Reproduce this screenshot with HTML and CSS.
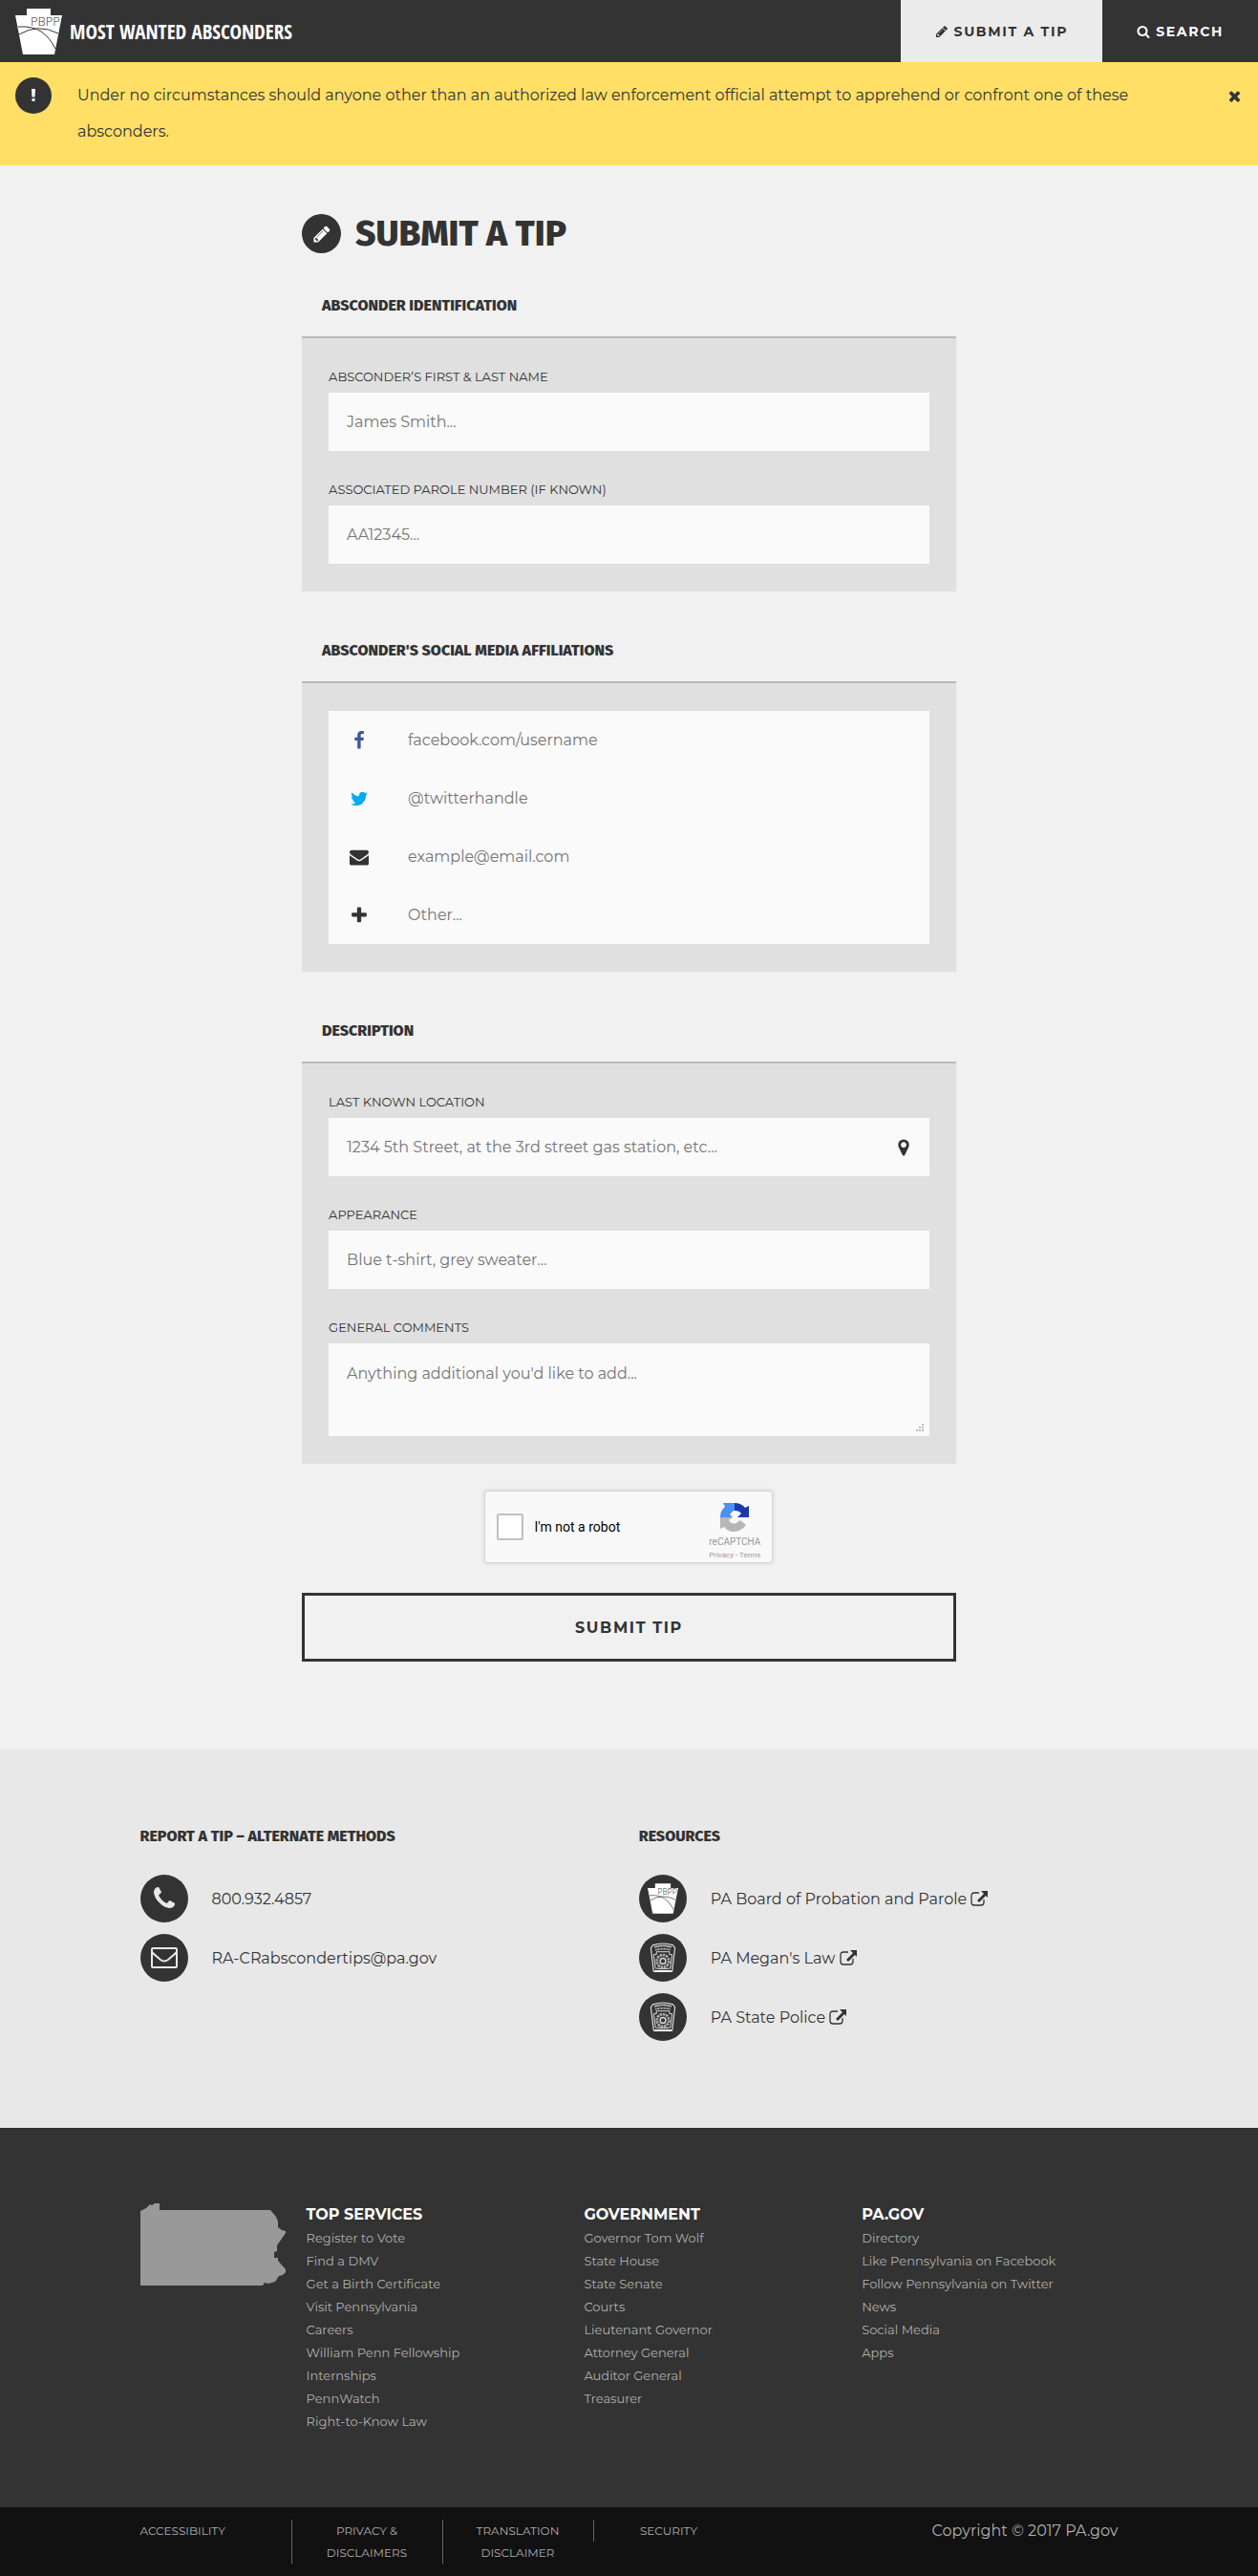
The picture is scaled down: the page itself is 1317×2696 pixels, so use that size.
FILE: index.html
```html
<!DOCTYPE html>
<html lang="en">
<head>
  <meta charset="UTF-8">
  <meta name="viewport" content="width=device-width, initial-scale=1.0">
  <title>Submit a Tip - Most Wanted Absconders</title>
  <link rel="stylesheet" href="styles.css">
</head>
<body>
  <!-- icon sprite -->
  <svg class="sprite" aria-hidden="true">
    <symbol id="pencil" viewBox="0 0 1792 1792"><path d="M491 1536l91-91-235-235-91 91v107h128v128h107zm523-928q0-22-22-22-10 0-17 7l-542 542q-7 7-7 17 0 22 22 22 10 0 17-7l542-542q7-7 7-17zm-54-192l416 416-832 832h-416v-416zm683 96q0 53-37 90l-166 166-416-416 166-165q36-38 90-38 53 0 91 38l235 234q37 39 37 91z"/></symbol>
    <symbol id="search" viewBox="0 0 1792 1792"><path d="M1216 832q0-185-131.500-316.500t-316.500-131.500-316.500 131.500-131.500 316.500 131.500 316.500 316.500 131.500 316.500-131.500 131.500-316.500zm512 832q0 52-38 90t-90 38q-54 0-90-38l-343-342q-179 124-399 124-143 0-273.500-55.500t-225-150-150-225-55.500-273.500 55.500-273.500 150-225 225-150 273.500-55.500 273.500 55.500 225 150 150 225 55.500 273.500q0 220-124 399l343 343q37 37 37 90z"/></symbol>
    <symbol id="exclamation" viewBox="0 0 12 28"><path d="M2 0h8l-1 17H3zM3 20h6v6H3z"/></symbol>
    <symbol id="close" viewBox="0 0 1792 1792"><path d="M1490 1322q0 40-28 68l-136 136q-28 28-68 28t-68-28l-294-294-294 294q-28 28-68 28t-68-28l-136-136q-28-28-28-68t28-68l294-294-294-294q-28-28-28-68t28-68l136-136q28-28 68-28t68 28l294 294 294-294q28-28 68-28t68 28l136 136q28 28 28 68t-28 68l-294 294 294 294q28 28 28 68z"/></symbol>
    <symbol id="facebook" viewBox="0 0 1792 1792"><path d="M1343 12v264h-157q-86 0-116 36t-30 108v189h293l-39 296h-254v759h-306v-759h-255v-296h255v-218q0-186 104-288.500t277-102.500q147 0 228 12z"/></symbol>
    <symbol id="twitter" viewBox="0 0 1792 1792"><path d="M1684 408q-67 98-162 167 1 14 1 42 0 130-38 259.500t-115.500 248.500-184.500 210.500-258 146-323 54.500q-271 0-496-145 35 4 78 4 225 0 401-138-105-2-188-64.500t-114-159.500q33 5 61 5 43 0 85-11-112-23-185.500-111.500t-73.500-205.500v-4q68 38 146 41-66-44-105-115t-39-154q0-88 44-163 121 149 294.500 238.500t371.500 99.500q-8-38-8-74 0-134 94.500-228.500t228.500-94.500q140 0 236 102 109-21 205-78-37 115-142 178 93-10 186-50z"/></symbol>
    <symbol id="envelope" viewBox="0 0 1792 1792"><path d="M1792 710v794q0 66-47 113t-113 47h-1472q-66 0-113-47t-47-113v-794q44 49 101 87 362 246 497 345 57 42 92.500 65.500t94.500 48 110 24.500h2q51 0 110-24.500t94.500-48 92.500-65.500q170-123 498-345 57-39 100-87zm0-294q0 79-49 151t-122 123q-376 261-468 325-10 7-42.500 31t-54 38.500-52 32.500-57.500 27-50 9h-2q-23 0-50-9t-57.500-27-52-32.500-54-38.500-42.500-31q-91-64-262-182.500t-205-142.500q-62-42-117-115.500t-55-136.500q0-78 41.500-130t118.500-52h1472q65 0 112.500 47t47.500 113z"/></symbol>
    <symbol id="plus" viewBox="0 0 1792 1792"><path d="M1600 736v192q0 40-28 68t-68 28h-416v416q0 40-28 68t-68 28h-192q-40 0-68-28t-28-68v-416h-416q-40 0-68-28t-28-68v-192q0-40 28-68t68-28h416v-416q0-40 28-68t68-28h192q40 0 68 28t28 68v416h416q40 0 68 28t28 68z"/></symbol>
    <symbol id="marker" viewBox="0 0 1792 1792"><path d="M1152 640q0-106-75-181t-181-75-181 75-75 181 75 181 181 75 181-75 75-181zm256 0q0 109-33 179l-364 774q-16 33-47.500 52t-67.500 19-67.500-19-46.500-52l-365-774q-33-70-33-179 0-212 150-362t362-150 362 150 150 362z"/></symbol>
    <symbol id="phone" viewBox="0 0 1792 1792"><path d="M1600 1240q0 27-10 70.500t-21 68.500q-21 50-122 106-94 51-186 51-27 0-53-3.500t-57.500-12.500-47-14.500-55.500-20.500-49-18q-98-35-175-83-127-79-264-216t-216-264q-48-77-83-175-3-9-18-49t-20.500-55.500-14.500-47-12.500-57.500-3.500-53q0-92 51-186 56-101 106-122 25-11 68.500-21t70.500-10q14 0 21 3 18 6 53 76 11 19 30 54t35 63.500 31 53.500q3 4 17.500 25t21.500 35.500 7 28.500q0 20-28.500 50t-62 55-62 53-28.500 46q0 9 5 22.500t8.500 20.500 14 24 11.500 19q76 137 174 235t235 174q2 1 19 11.500t24 14 20.500 8.500 22.500 5q18 0 46-28.500t53-62 55-62 50-28.500q14 0 28.500 7t35.500 21.500 25 17.500q25 15 53.500 31t63.500 35 54 30q70 35 76 53 3 7 3 21z"/></symbol>
    <symbol id="envelope-o" viewBox="0 0 28 28"><g fill="none" stroke="currentColor" stroke-width="2"><rect x="1" y="4" width="26" height="20" rx="1"/><path d="M1 8q3 3 9 8 4 3 8 0 6-5 9-8"/></g></symbol>
    <symbol id="external" viewBox="0 0 18 16"><path d="M9 2H4Q1 2 1 5v7q0 3 3 3h7q3 0 3-3V9" fill="none" stroke="currentColor" stroke-width="1.300"/><path d="M11 0h7v7l-2-2-7 7-2-2 7-7z"/></symbol>
    <symbol id="keystone" viewBox="0 0 49 48">
      <path d="M12 0h25v7h12l-8 41H8L0 7h12z" fill="#fff"/>
      <path d="M3 19q15-1 24 5t15 18M4 27q20-12 41-1" fill="none" stroke="#333" stroke-width="1"/>
      <text x="16" y="18" font-family="Open Sans, sans-serif" font-size="13" font-weight="300" fill="#333">PBPP</text>
    </symbol>
    <symbol id="police" viewBox="0 0 28 33">
      <g fill="none" stroke="#ddd">
        <path d="M3 3q11-4 22 0l2 3-3 25H4L1 6z" stroke-width="1.200"/>
        <path d="M5 5q9-3 18 0" stroke-width="2" stroke-dasharray="1.500 .6"/>
        <path d="M6 8q8-2 16 0" stroke-width="1.500" stroke-dasharray="1 .5"/>
        <path d="M7 10h14v3h3l-2 15H6L4 13h3z"/>
        <circle cx="14" cy="20" r="6.500" stroke-width="3" stroke-dasharray="2.500 .8" stroke="#aaa"/>
        <circle cx="14" cy="20" r="3" stroke-width="1.500"/>
      </g>
      <path d="M5 30h18v2H5z" fill="#fff"/>
      <path d="M9 28h10v1H9z" fill="#ccc"/>
    </symbol>
    <symbol id="recaptcha" viewBox="0 0 30 30">
      <path d="M15 0v8q-2 0-3 2l-2 2 3 3H0Q0 8 5 4L3 0z" fill="#4a90f5"/>
      <path d="M15 0q7 0 11 5l4-2v12H18l4-4q-2-3-7-3z" fill="#1c3aa9"/>
      <path d="M0 15h13l-4 3q3 5 8 3l4-3 6 5q-5 7-13 7-6 0-10-5l-4 2z" fill="#b6b6b6"/>
    </symbol>
  </svg>

  <header class="top-bar">
    <a class="brand" href="#">
      <svg class="brand-logo"><use href="#keystone"/></svg>
      <span>Most Wanted Absconders</span>
    </a>
    <nav class="main-nav">
      <a class="nav-link active" href="#"><svg class="icon"><use href="#pencil"/></svg>Submit a Tip</a>
      <a class="nav-link" href="#"><svg class="icon"><use href="#search"/></svg>Search</a>
    </nav>
  </header>

  <div class="alert">
    <span class="circle circle-sm"><svg class="icon"><use href="#exclamation"/></svg></span>
    <p>Under no circumstances should anyone other than an authorized law enforcement official attempt to apprehend or confront one of these absconders.</p>
    <button class="alert-close" type="button" aria-label="Close"><svg class="icon"><use href="#close"/></svg></button>
  </div>

  <main class="tip">
    <div class="title">
      <span class="circle circle-md"><svg class="icon"><use href="#pencil"/></svg></span>
      <h1>Submit a Tip</h1>
    </div>

    <form class="tip-form">
      <section>
        <h2>Absconder Identification</h2>
        <div class="panel">
          <div class="field">
            <label for="name">Absconder’s First &amp; Last Name</label>
            <input type="text" id="name" placeholder="James Smith...">
          </div>
          <div class="field">
            <label for="parole">Associated Parole Number (If Known)</label>
            <input type="text" id="parole" placeholder="AA12345...">
          </div>
        </div>
      </section>

      <section>
        <h2>Absconder's Social Media Affiliations</h2>
        <div class="panel">
          <div class="social">
            <label for="facebook-name" aria-label="Facebook"><svg class="icon facebook"><use href="#facebook"/></svg></label>
            <input type="text" id="facebook-name" placeholder="facebook.com/username">
          </div>
          <div class="social">
            <label for="twitter-name" aria-label="Twitter"><svg class="icon twitter"><use href="#twitter"/></svg></label>
            <input type="text" id="twitter-name" placeholder="@twitterhandle">
          </div>
          <div class="social">
            <label for="email" aria-label="Email"><svg class="icon"><use href="#envelope"/></svg></label>
            <input type="email" id="email" placeholder="example@email.com">
          </div>
          <div class="social">
            <label for="other" aria-label="Other"><svg class="icon"><use href="#plus"/></svg></label>
            <input type="text" id="other" placeholder="Other...">
          </div>
        </div>
      </section>

      <section>
        <h2>Description</h2>
        <div class="panel">
          <div class="field">
            <label for="location">Last Known Location</label>
            <div class="input-icon">
              <input type="text" id="location" placeholder="1234 5th Street, at the 3rd street gas station, etc...">
              <button type="button" aria-label="Use my location"><svg class="icon"><use href="#marker"/></svg></button>
            </div>
          </div>
          <div class="field">
            <label for="appearance">Appearance</label>
            <input type="text" id="appearance" placeholder="Blue t-shirt, grey sweater...">
          </div>
          <div class="field">
            <label for="comments">General Comments</label>
            <div class="comments">
              <textarea id="comments" placeholder="Anything additional you'd like to add..."></textarea>
              <svg class="grip" viewBox="0 0 8 8"><path d="M6 0h2v2H6zM3 3h2v2H3zM6 3h2v2H6zM0 6h2v2H0zM3 6h2v2H3zM6 6h2v2H6z"/></svg>
            </div>
          </div>
        </div>
      </section>

      <div class="captcha">
        <input type="checkbox" id="robot">
        <label for="robot">I'm not a robot</label>
        <div class="captcha-logo">
          <svg><use href="#recaptcha"/></svg>
          <span>reCAPTCHA</span>
          <small><a href="#">Privacy</a> - <a href="#">Terms</a></small>
        </div>
      </div>

      <button class="submit" type="submit">Submit Tip</button>
    </form>
  </main>

  <section class="info">
    <div class="container info-grid">
      <div>
        <h2>Report a Tip – Alternate Methods</h2>
        <ul class="contact">
          <li><span class="circle circle-lg"><svg class="icon"><use href="#phone"/></svg></span><a href="tel:8009324857">800.932.4857</a></li>
          <li><span class="circle circle-lg"><svg class="icon"><use href="#envelope-o"/></svg></span><a href="mailto:RA-CRabscondertips@pa.gov">RA-CRabscondertips@pa.gov</a></li>
        </ul>
      </div>
      <div>
        <h2>Resources</h2>
        <ul class="contact">
          <li><span class="circle circle-lg"><svg class="badge"><use href="#keystone"/></svg></span><a href="#">PA Board of Probation and Parole <svg class="external"><use href="#external"/></svg></a></li>
          <li><span class="circle circle-lg"><svg class="badge"><use href="#police"/></svg></span><a href="#">PA Megan's Law <svg class="external"><use href="#external"/></svg></a></li>
          <li><span class="circle circle-lg"><svg class="badge"><use href="#police"/></svg></span><a href="#">PA State Police <svg class="external"><use href="#external"/></svg></a></li>
        </ul>
      </div>
    </div>
  </section>

  <footer>
    <div class="footer-main">
      <div class="container footer-grid">
        <svg class="state" viewBox="0 0 152 87"><path d="M0 8l6-3 4-4 2 1 3-2h5v7h116l6 7 2 5v6l4 3 4 1v2l-9 13v6l-3 1v6h4v3l8 9v3l-3 3-4 1-4 6-7 2-4-1-2 3H0z"/></svg>
        <div>
          <h3>Top Services</h3>
          <ul>
            <li><a href="#">Register to Vote</a></li>
            <li><a href="#">Find a DMV</a></li>
            <li><a href="#">Get a Birth Certificate</a></li>
            <li><a href="#">Visit Pennsylvania</a></li>
            <li><a href="#">Careers</a></li>
            <li><a href="#">William Penn Fellowship</a></li>
            <li><a href="#">Internships</a></li>
            <li><a href="#">PennWatch</a></li>
            <li><a href="#">Right-to-Know Law</a></li>
          </ul>
        </div>
        <div>
          <h3>Government</h3>
          <ul>
            <li><a href="#">Governor Tom Wolf</a></li>
            <li><a href="#">State House</a></li>
            <li><a href="#">State Senate</a></li>
            <li><a href="#">Courts</a></li>
            <li><a href="#">Lieutenant Governor</a></li>
            <li><a href="#">Attorney General</a></li>
            <li><a href="#">Auditor General</a></li>
            <li><a href="#">Treasurer</a></li>
          </ul>
        </div>
        <div>
          <h3>PA.gov</h3>
          <ul>
            <li><a href="#">Directory</a></li>
            <li><a href="#">Like Pennsylvania on Facebook</a></li>
            <li><a href="#">Follow Pennsylvania on Twitter</a></li>
            <li><a href="#">News</a></li>
            <li><a href="#">Social Media</a></li>
            <li><a href="#">Apps</a></li>
          </ul>
        </div>
      </div>
    </div>
    <div class="footer-bottom">
      <div class="container legal">
        <ul>
          <li><a href="#">Accessibility</a></li>
          <li><a href="#">Privacy &amp; Disclaimers</a></li>
          <li><a href="#">Translation Disclaimer</a></li>
          <li><a href="#">Security</a></li>
        </ul>
        <p>Copyright © 2017 PA.gov</p>
      </div>
    </div>
  </footer>
</body>
</html>
```
FILE: styles.css
```css
* {
  box-sizing: border-box;
}

body {
  margin: 0;
  background: #f1f1f1;
  color: #333;
  font-family: Montserrat, Inter, sans-serif;
  font-size: 16px;
  font-weight: 400;
}

h1, h2, h3, p, ul {
  margin: 0;
  padding: 0;
}

ul {
  list-style: none;
}

a {
  color: inherit;
  text-decoration: none;
}

button {
  padding: 0;
  border: 0;
  background: none;
  color: inherit;
  font-family: inherit;
  cursor: pointer;
}

h1, h2 {
  font-family: "Fira Sans", Lato, sans-serif;
  font-weight: 800;
  text-transform: uppercase;
}

h2 {
  font-size: 16px;
}

.sprite {
  display: none;
}

.icon {
  width: 14px;
  height: 14px;
  fill: currentColor;
  flex-shrink: 0;
}

.container {
  max-width: 1024px;
  margin: 0 auto;
}

/* round icon holders */
.circle {
  display: flex;
  align-items: center;
  justify-content: center;
  flex-shrink: 0;
  border-radius: 50%;
  background: #333;
  color: #fff;
}

.circle-sm {
  width: 38px;
  height: 38px;
}

.circle-md {
  width: 41px;
  height: 41px;
}

.circle-md .icon {
  width: 20px;
  height: 20px;
}

.circle-lg {
  width: 50px;
  height: 50px;
}

.circle-lg .icon {
  width: 28px;
  height: 28px;
  color: #e8e8e8;
}

.badge {
  width: 32px;
  height: 32px;
}

/* header */
.top-bar {
  display: flex;
  justify-content: space-between;
  height: 65px;
  background: #333;
  color: #fff;
}

.brand {
  display: flex;
  align-items: center;
  gap: 8px;
  padding-left: 16px;
  font-family: "Open Sans Condensed", "Liberation Sans Narrow", "Open Sans", sans-serif;
  font-size: 21px;
  font-weight: 700;
  text-transform: uppercase;
}

.brand-logo {
  width: 49px;
  height: 48px;
}

.main-nav {
  display: flex;
}

.nav-link {
  display: flex;
  align-items: center;
  gap: 6px;
  padding: 0 36px;
  font-size: 14px;
  font-weight: 700;
  letter-spacing: 0.12em;
  text-transform: uppercase;
}

.nav-link.active {
  background: #ebebeb;
  color: #333;
}

.alert {
  display: flex;
  gap: 27px;
  padding: 16px;
  background: #ffdf66;
  line-height: 38px;
}

.alert p {
  flex: 1;
}

.alert-close {
  display: flex;
  align-items: center;
  height: 38px;
}

.alert-close .icon {
  width: 17px;
  height: 17px;
}

/* tip form */
.tip {
  width: 52%;
  margin: 0 auto;
  padding: 51px 0 92px;
}

.title {
  display: flex;
  align-items: center;
  gap: 15px;
  height: 41px;
  margin-bottom: 23px;
}

.title h1 {
  font-size: 37px;
}

.tip-form section + section {
  margin-top: 30px;
}

.tip-form h2 {
  padding-left: 21px;
  line-height: 64px;
}

.panel {
  padding: 29px 28px;
  border-top: 2px solid #b9b9b9;
  background: #e0e0e0;
}

.field + .field {
  margin-top: 29px;
}

.field label {
  display: block;
  margin-bottom: 6px;
  font-size: 13px;
  line-height: 22px;
  text-transform: uppercase;
}

input[type="text"],
input[type="email"],
textarea {
  display: block;
  width: 100%;
  height: 61px;
  padding: 0 19px;
  border: 0;
  border-radius: 0;
  background: #fafafa;
  font-family: inherit;
  font-size: 16px;
}

::placeholder {
  color: #757575;
}

.social {
  display: flex;
  background: #fafafa;
}

.social label {
  display: flex;
  align-items: center;
  justify-content: center;
  width: 64px;
  flex-shrink: 0;
}

.social .icon {
  width: 20px;
  height: 20px;
}

.social .facebook {
  color: #3b5998;
}

.social .twitter {
  color: #00aced;
}

.input-icon {
  display: flex;
  background: #fafafa;
}

.input-icon button {
  display: flex;
  align-items: center;
  padding-right: 17px;
}

.input-icon .icon {
  width: 20px;
  height: 20px;
}

.comments {
  position: relative;
}

textarea {
  height: 97px;
  padding-top: 22px;
  resize: none;
}

.grip {
  position: absolute;
  right: 6px;
  bottom: 5px;
  width: 8px;
  height: 8px;
  fill: #bbb;
}

.captcha {
  display: flex;
  align-items: center;
  width: 302px;
  height: 76px;
  margin: 28px auto 31px;
  padding: 0 12px;
  border: 1px solid #d3d3d3;
  border-radius: 3px;
  background: #f9f9f9;
  box-shadow: 0 0 4px 1px rgba(0, 0, 0, 0.08);
  color: #000;
  font-family: Roboto, sans-serif;
  font-size: 14px;
}

.captcha input {
  appearance: none;
  width: 28px;
  height: 28px;
  margin: 0 11px 0 0;
  border: 2px solid #c1c1c1;
  border-radius: 2px;
  background: #fff;
}

.captcha label {
  flex: 1;
}

.captcha-logo {
  display: flex;
  flex-direction: column;
  align-items: center;
  align-self: flex-end;
  color: #999;
  font-size: 10px;
  line-height: 14px;
}

.captcha-logo svg {
  width: 30px;
  height: 30px;
  margin-bottom: 4px;
}

.captcha-logo small {
  font-size: 8px;
}

.submit {
  display: block;
  width: 100%;
  height: 72px;
  border: 3px solid #333;
  font-size: 16px;
  font-weight: 700;
  letter-spacing: 0.1em;
  text-transform: uppercase;
}

/* contact and resources */
.info {
  padding: 77px 0 91px;
  background: #e8e8e8;
}

.info-grid {
  display: grid;
  grid-template-columns: 51% 49%;
}

.info h2 {
  margin-bottom: 26px;
  line-height: 28px;
}

.contact {
  display: grid;
  gap: 12px;
}

.contact li {
  display: flex;
  align-items: center;
  gap: 25px;
}

.external {
  width: 18px;
  height: 16px;
  fill: currentColor;
  vertical-align: -2px;
}

/* footer */
footer {
  color: #b0b0b0;
}

.footer-main {
  padding: 79px 0 78px;
  background: #333;
  font-size: 13px;
  line-height: 24px;
}

.footer-grid {
  display: grid;
  grid-template-columns: 17% 28.4% 28.4% 1fr;
}

.state {
  width: 152px;
  height: 87px;
  fill: #999;
}

.footer-main h3 {
  color: #fff;
  font-size: 16px;
  font-weight: 700;
  text-transform: uppercase;
}

.footer-bottom {
  padding: 13px 0;
  background: #111;
}

.legal {
  display: flex;
  justify-content: space-between;
  line-height: 23px;
}

.legal ul {
  display: flex;
  align-items: flex-start;
  font-size: 12px;
  text-transform: uppercase;
}

.legal li {
  width: 158px;
  padding: 0 20px;
  text-align: center;
}

.legal li:first-child {
  padding-left: 0;
  text-align: left;
}

.legal li + li {
  border-left: 1px solid #666;
}

@media (max-width: 768px) {
  .tip,
  .container {
    width: 92%;
  }

  .info-grid,
  .footer-grid {
    grid-template-columns: 1fr;
    gap: 24px;
  }
}
```
